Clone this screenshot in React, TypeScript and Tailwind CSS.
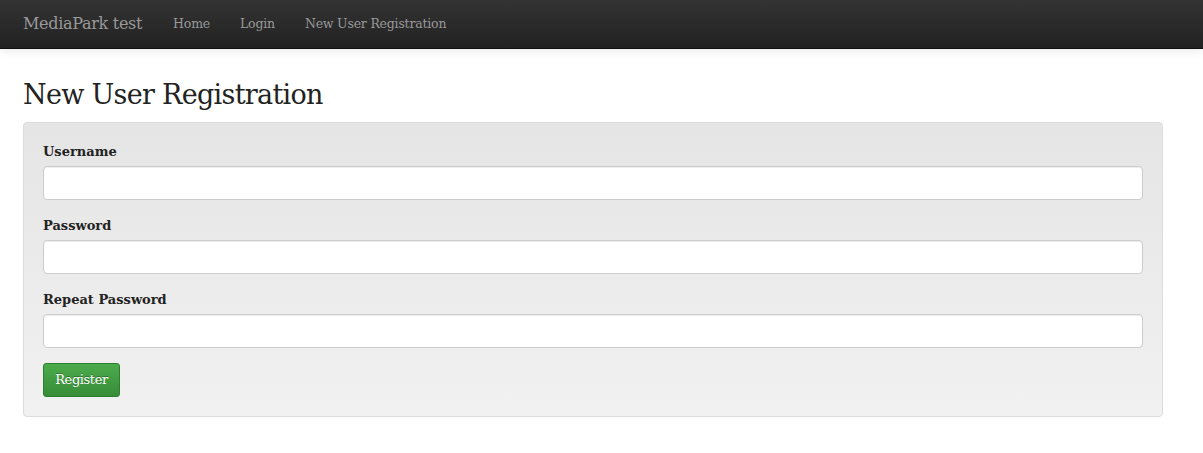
export default function App() {
  const fields = ["Username", "Password", "Repeat Password"];

  return (
    <div className="min-h-screen bg-white font-['DejaVu_Serif',serif] text-[#333]">
      {/* Navbar */}
      <nav className="h-[49px] bg-gradient-to-b from-[#333333] to-[#222222] border-b border-[#111] shadow-[0_1px_10px_rgba(0,0,0,0.1)]">
        <div className="flex items-center h-full px-[23px]">
          <span className="text-[16px] text-[#999] mr-[31px] tracking-[-0.3px]">MediaPark test</span>
          <div className="flex items-center gap-[30px] text-[12.5px] text-[#999] tracking-[-0.2px]">
            <span>Home</span>
            <span>Login</span>
            <span>New User Registration</span>
          </div>
        </div>
      </nav>

      <main className="px-[23px] pt-[28px]">
        <h1 className="text-[27px] leading-[36px] text-[#222] tracking-[-0.7px] mb-[9px]">New User Registration</h1>

        <div className="w-[1140px] rounded-[4px] border border-[#dcdcdc] bg-gradient-to-b from-[#e5e5e5] to-[#f1f1f1] px-[19px] pt-[19px] pb-[19px]">
          <div className="flex flex-col">
            {fields.map((f, i) => (
              <div key={f} className={i < 2 ? "flex flex-col mb-[16px]" : "flex flex-col mb-[15px]"}>
                <label className="text-[13px] leading-[20px] font-bold text-[#222] mb-[4px]">{f}</label>
                <input
                  type={f === "Username" ? "text" : "password"}
                  className="h-[34px] w-full rounded-[4px] border border-[#ccc] bg-white shadow-[inset_0_1px_1px_rgba(0,0,0,0.075)] outline-none"
                />
              </div>
            ))}
            <div>
              <button className="h-[34px] w-[77px] rounded-[3px] border border-[#2f7d2f] bg-gradient-to-b from-[#4cab4c] to-[#378d37] text-[13px] text-white tracking-[-0.4px] [text-shadow:0_-1px_0_rgba(0,0,0,0.3)]">
                Register
              </button>
            </div>
          </div>
        </div>
      </main>
    </div>
  );
}
